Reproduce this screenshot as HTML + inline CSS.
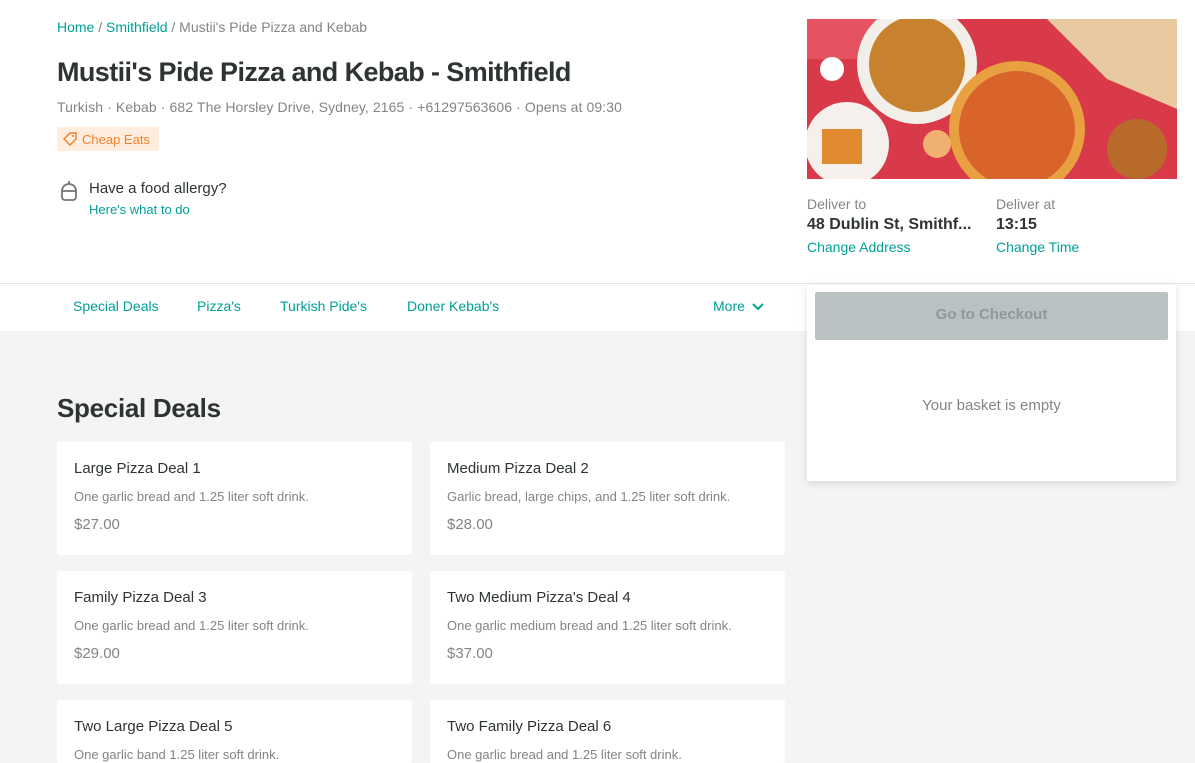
<!DOCTYPE html>
<html><head><meta charset="utf-8"><style>
*{margin:0;padding:0;box-sizing:border-box}
html,body{width:1195px;height:763px;overflow:hidden}
body{background:#f3f4f3;font-family:"Liberation Sans",sans-serif;position:relative;color:#2e3333}
.top{position:absolute;left:0;top:0;width:1195px;height:284px;background:#fff;border-bottom:1px solid #e4e6e6}
.nav{position:absolute;left:0;top:284px;width:1195px;height:47px;background:#fff}
.a{position:absolute;white-space:nowrap}
.teal{color:#00a09a}
.card{position:absolute;background:#fff;width:355px;height:113px;border-radius:2px}
.card .t{position:absolute;left:17px;top:18px;font-size:15px;color:#2e3333}
.card .d{position:absolute;left:17px;top:47px;font-size:13px;color:#828585}
.card .p{position:absolute;left:17px;top:74px;font-size:15px;color:#828585}
</style></head><body>
<div class="top"></div>
<div class="a" style="left:57px;top:19px;font-size:14px;color:#828585"><span class="teal">Home</span> / <span class="teal">Smithfield</span> / Mustii's Pide Pizza and Kebab</div>
<div class="a" style="left:57px;top:57px;font-size:27px;font-weight:bold;color:#2e3333;letter-spacing:-0.6px">Mustii's Pide Pizza and Kebab - Smithfield</div>
<div class="a" style="left:57px;top:99px;font-size:14px;color:#828585;letter-spacing:0.1px">Turkish · Kebab · 682 The Horsley Drive, Sydney, 2165 · +61297563606 · Opens at 09:30</div>
<div class="a" style="left:57px;top:127px;width:102px;height:24px;background:#ffeee0;border-radius:2px;font-size:13px;color:#f5812a;padding:5px 0 0 25px">Cheap Eats
<svg style="position:absolute;left:6px;top:5px" width="14" height="14" viewBox="0 0 14 14"><path d="M1 7 L7 1 H13 V7 L7 13 Z" fill="none" stroke="#f5812a" stroke-width="1.5"/><circle cx="10" cy="4" r="1" fill="#f5812a"/></svg></div>
<svg class="a" style="left:59px;top:179px" width="20" height="24" viewBox="0 0 20 24"><path d="M10 2 V5 M3 12 A7 7 0 0 1 17 12 Z M3 12 V18 A3 3 0 0 0 6 21 H14 A3 3 0 0 0 17 18 V12" fill="none" stroke="#707474" stroke-width="1.8"/></svg>
<div class="a" style="left:89px;top:180px;font-size:15px;color:#2e3333">Have a food allergy?</div>
<div class="a teal" style="left:89px;top:202px;font-size:13px">Here's what to do</div>
<svg class="a" style="left:807px;top:19px" width="370" height="160" viewBox="0 0 370 160">
<rect width="370" height="160" fill="#d93a4a"/>
<rect x="0" y="0" width="150" height="40" fill="#e55260"/>
<circle cx="110" cy="45" r="60" fill="#f2efe8"/><circle cx="110" cy="45" r="48" fill="#c8822f"/>
<circle cx="210" cy="110" r="68" fill="#e8a040"/><circle cx="210" cy="110" r="58" fill="#d8642c"/>
<circle cx="40" cy="125" r="42" fill="#f5f0ec"/><rect x="15" y="110" width="40" height="35" fill="#e08a30"/>
<polygon points="240,0 370,0 370,90 300,60" fill="#e8c9a0"/>
<circle cx="330" cy="130" r="30" fill="#b86a2a"/>
<circle cx="25" cy="50" r="12" fill="#fff"/>
<circle cx="130" cy="125" r="14" fill="#f0b070"/>
</svg>
<div class="a" style="left:807px;top:196px;font-size:14px;color:#828585">Deliver to</div>
<div class="a" style="left:807px;top:216px;font-size:16px;font-weight:bold;color:#2e3333">48 Dublin St, Smithf...</div>
<div class="a teal" style="left:807px;top:239px;font-size:14px">Change Address</div>
<div class="a" style="left:996px;top:196px;font-size:14px;color:#828585">Deliver at</div>
<div class="a" style="left:996px;top:216px;font-size:16px;font-weight:bold;color:#2e3333">13:15</div>
<div class="a teal" style="left:996px;top:239px;font-size:14px">Change Time</div>
<div class="nav"></div>
<div class="a teal" style="left:73px;top:298px;font-size:14px">Special Deals</div>
<div class="a teal" style="left:197px;top:298px;font-size:14px">Pizza's</div>
<div class="a teal" style="left:280px;top:298px;font-size:14px">Turkish Pide's</div>
<div class="a teal" style="left:407px;top:298px;font-size:14px">Doner Kebab's</div>
<div class="a teal" style="left:713px;top:298px;font-size:14px">More</div>
<svg class="a" style="left:751px;top:302px" width="14" height="10" viewBox="0 0 14 10"><path d="M2 2 L7 7 L12 2" fill="none" stroke="#00a09a" stroke-width="2"/></svg>
<div class="a" style="left:807px;top:285px;width:369px;height:196px;background:#fff;box-shadow:0 2px 8px rgba(0,0,0,0.12)"></div>
<div class="a" style="left:815px;top:292px;width:353px;height:48px;background:#bac1c2;border-radius:2px;color:#8f9999;font-size:15px;font-weight:bold;text-align:center;line-height:46px">Go to Checkout</div>
<div class="a" style="left:807px;top:397px;width:369px;text-align:center;font-size:15px;color:#828585">Your basket is empty</div>
<div class="a" style="left:57px;top:393px;font-size:26px;font-weight:bold;color:#2e3333;letter-spacing:-0.3px">Special Deals</div>
<div class="card" style="left:57px;top:442px"><div class="t">Large Pizza Deal 1</div><div class="d">One garlic bread and 1.25 liter soft drink.</div><div class="p">$27.00</div></div>
<div class="card" style="left:430px;top:442px"><div class="t">Medium Pizza Deal 2</div><div class="d">Garlic bread, large chips, and 1.25 liter soft drink.</div><div class="p">$28.00</div></div>
<div class="card" style="left:57px;top:571px"><div class="t">Family Pizza Deal 3</div><div class="d">One garlic bread and 1.25 liter soft drink.</div><div class="p">$29.00</div></div>
<div class="card" style="left:430px;top:571px"><div class="t">Two Medium Pizza's Deal 4</div><div class="d">One garlic medium bread and 1.25 liter soft drink.</div><div class="p">$37.00</div></div>
<div class="card" style="left:57px;top:700px;height:63px"><div class="t">Two Large Pizza Deal 5</div><div class="d">One garlic band 1.25 liter soft drink.</div></div>
<div class="card" style="left:430px;top:700px;height:63px"><div class="t">Two Family Pizza Deal 6</div><div class="d">One garlic bread and 1.25 liter soft drink.</div></div>
</body></html>
